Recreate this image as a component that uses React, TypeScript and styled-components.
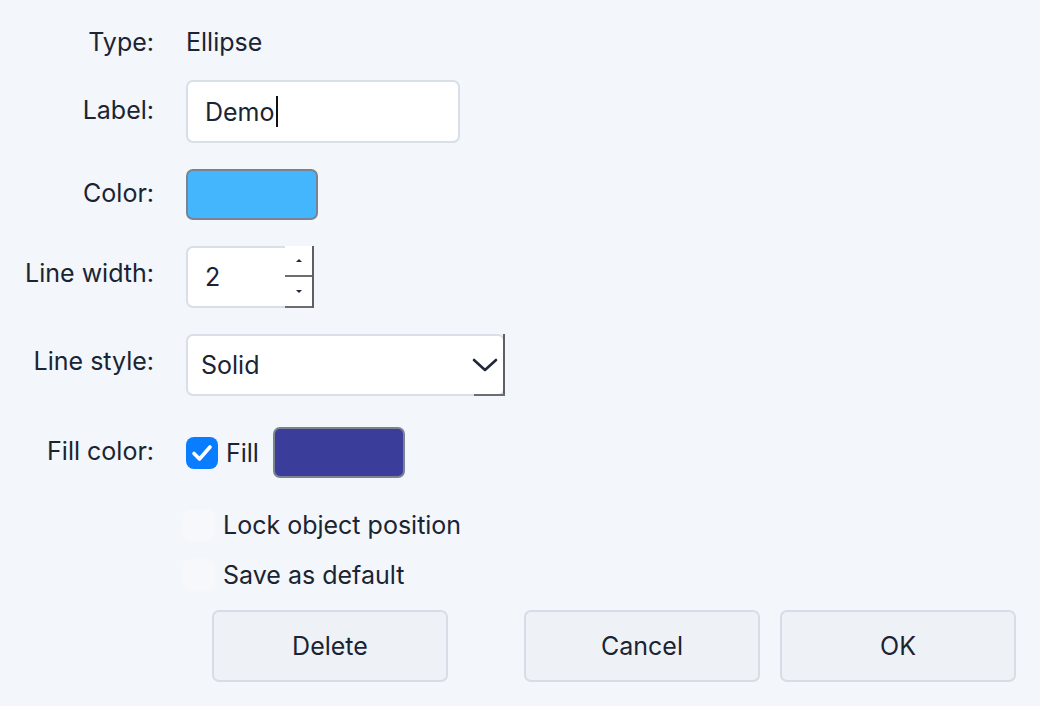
import React, { FC } from "react";
import styled, { createGlobalStyle } from "styled-components";

const GlobalStyle = createGlobalStyle`
  html, body {
    margin: 0;
    padding: 0;
    background: #f3f6fa;
  }
  body {
    font-family: Inter, "Noto Sans", "Liberation Sans", sans-serif;
    color: #1a2433;
  }
`;

const Dialog = styled.div`
  width: 1040px;
  height: 706px;
  box-sizing: border-box;
  padding-top: 26px;
  display: flex;
  flex-direction: column;
  font-size: 25px;
  overflow: hidden;
`;

const Row = styled.div<{ $gap?: number }>`
  display: flex;
  align-items: center;
  gap: 32px;
  margin-bottom: ${(p) => p.$gap ?? 26}px;
`;

const Label = styled.div<{ $lift?: number }>`
  width: 154px;
  text-align: right;
  line-height: 32px;
  position: relative;
  top: -${(p) => p.$lift ?? 2}px;
`;

const Value = styled.div`
  line-height: 32px;
`;

const TextField = styled.div`
  box-sizing: border-box;
  width: 274px;
  height: 63px;
  background: #fff;
  border: 2px solid #d9dfe8;
  border-radius: 7px;
  padding-left: 17px;
  display: flex;
  align-items: center;
`;

const Caret = styled.span`
  display: inline-block;
  width: 2px;
  height: 31px;
  background: #111;
  margin-left: 1px;
`;

const Swatch = styled.div<{ $color: string }>`
  box-sizing: border-box;
  width: 132px;
  height: 51px;
  background: ${(p) => p.$color};
  border: 2px solid #7b8393;
  border-radius: 7px;
`;

const SpinBox = styled.div`
  box-sizing: border-box;
  width: 128px;
  height: 62px;
  background: #fff;
  border: 2px solid #d9dfe8;
  border-radius: 7px;
  display: flex;
  align-items: stretch;
  padding-left: 17px;
`;

const SpinValue = styled.div`
  flex: 1;
  display: flex;
  align-items: center;
`;

const SpinButtons = styled.div`
  width: 27px;
  margin: -2px -2px -2px 0;
  display: flex;
  flex-direction: column;
  border-right: 2px solid #5d5f63;
`;

const SpinButton = styled.div`
  flex: 1;
  display: flex;
  align-items: center;
  justify-content: center;
  border-bottom: 2px solid #6b6d71;
  background: #fff;
`;

const Triangle = styled.div<{ $down?: boolean }>`
  width: 0;
  height: 0;
  border-left: 3px solid transparent;
  border-right: 3px solid transparent;
  ${(p) =>
    p.$down
      ? "border-top: 3px solid #1e2838;"
      : "border-bottom: 3px solid #1e2838;"}
`;

const Select = styled.div`
  box-sizing: border-box;
  width: 319px;
  height: 62px;
  background: #fff;
  border: 2px solid #d9dfe8;
  border-radius: 7px;
  display: flex;
  align-items: center;
  padding-left: 13px;
`;

const SelectText = styled.div`
  flex: 1;
`;

const SelectArrow = styled.div`
  align-self: stretch;
  width: 31px;
  margin: -2px -2px -2px 0;
  display: flex;
  align-items: center;
  justify-content: flex-start;
  border-right: 2px solid #5d5f63;
  position: relative;
  &::after {
    content: "";
    position: absolute;
    right: -2px;
    bottom: 0;
    width: 31px;
    height: 2px;
    background: #6b6d71;
  }
`;

const FillGroup = styled.div`
  display: flex;
  align-items: center;
`;

const CheckBox = styled.div<{ $checked?: boolean }>`
  box-sizing: border-box;
  width: 32px;
  height: 32px;
  border-radius: 8px;
  display: flex;
  align-items: center;
  justify-content: center;
  background: ${(p) => (p.$checked ? "#0a7cff" : "#f6f8fb")};
`;

const FillText = styled.span`
  margin-left: 8px;
  margin-right: 14px;
`;

const OptionRow = styled.div<{ $gap: number }>`
  display: flex;
  align-items: center;
  padding-left: 183px;
  gap: 8px;
  line-height: 32px;
  margin-bottom: ${(p) => p.$gap}px;
`;

const Buttons = styled.div`
  display: flex;
  gap: 20px;
  padding-left: 212px;
  padding-right: 24px;
`;

const Spacer = styled.div`
  flex: 1;
`;

const Button = styled.button`
  box-sizing: border-box;
  width: 236px;
  height: 72px;
  background: #eef2f7;
  border: 2px solid #d7dde7;
  border-radius: 7px;
  font-family: inherit;
  font-size: 25px;
  color: #1a2433;
  padding: 0;
`;

const Check: FC = () => (
  <svg width="22" height="18" viewBox="0 0 22 18">
    <path
      d="M3 9.5 L8.5 15 L19 3"
      fill="none"
      stroke="#fff"
      strokeWidth="3.6"
      strokeLinecap="round"
      strokeLinejoin="round"
    />
  </svg>
);

const Chevron: FC = () => (
  <svg width="26" height="16" viewBox="0 0 26 16">
    <path
      d="M2 3 L13 13 L24 3"
      fill="none"
      stroke="#1e2838"
      strokeWidth="2.6"
      strokeLinecap="round"
      strokeLinejoin="round"
    />
  </svg>
);

const App: FC = () => (
  <>
    <GlobalStyle />
    <Dialog>
      <Row $gap={22}>
        <Label $lift={0}>Type:</Label>
        <Value>Ellipse</Value>
      </Row>
      <Row>
        <Label>Label:</Label>
        <TextField>
          Demo
          <Caret />
        </TextField>
      </Row>
      <Row>
        <Label>Color:</Label>
        <Swatch $color="#44b6fe" />
      </Row>
      <Row>
        <Label $lift={4}>Line width:</Label>
        <SpinBox>
          <SpinValue>2</SpinValue>
          <SpinButtons>
            <SpinButton>
              <Triangle />
            </SpinButton>
            <SpinButton>
              <Triangle $down />
            </SpinButton>
          </SpinButtons>
        </SpinBox>
      </Row>
      <Row $gap={31}>
        <Label $lift={4}>Line style:</Label>
        <Select>
          <SelectText>Solid</SelectText>
          <SelectArrow>
            <Chevron />
          </SelectArrow>
        </Select>
      </Row>
      <Row $gap={31}>
        <Label>Fill color:</Label>
        <FillGroup>
          <CheckBox $checked>
            <Check />
          </CheckBox>
          <FillText>Fill</FillText>
          <Swatch $color="#3b3d9a" />
        </FillGroup>
      </Row>
      <OptionRow $gap={18}>
        <CheckBox />
        <span>Lock object position</span>
      </OptionRow>
      <OptionRow $gap={19}>
        <CheckBox />
        <span>Save as default</span>
      </OptionRow>
      <Buttons>
        <Button>Delete</Button>
        <Spacer />
        <Button>Cancel</Button>
        <Button>OK</Button>
      </Buttons>
    </Dialog>
  </>
);

export default App;
